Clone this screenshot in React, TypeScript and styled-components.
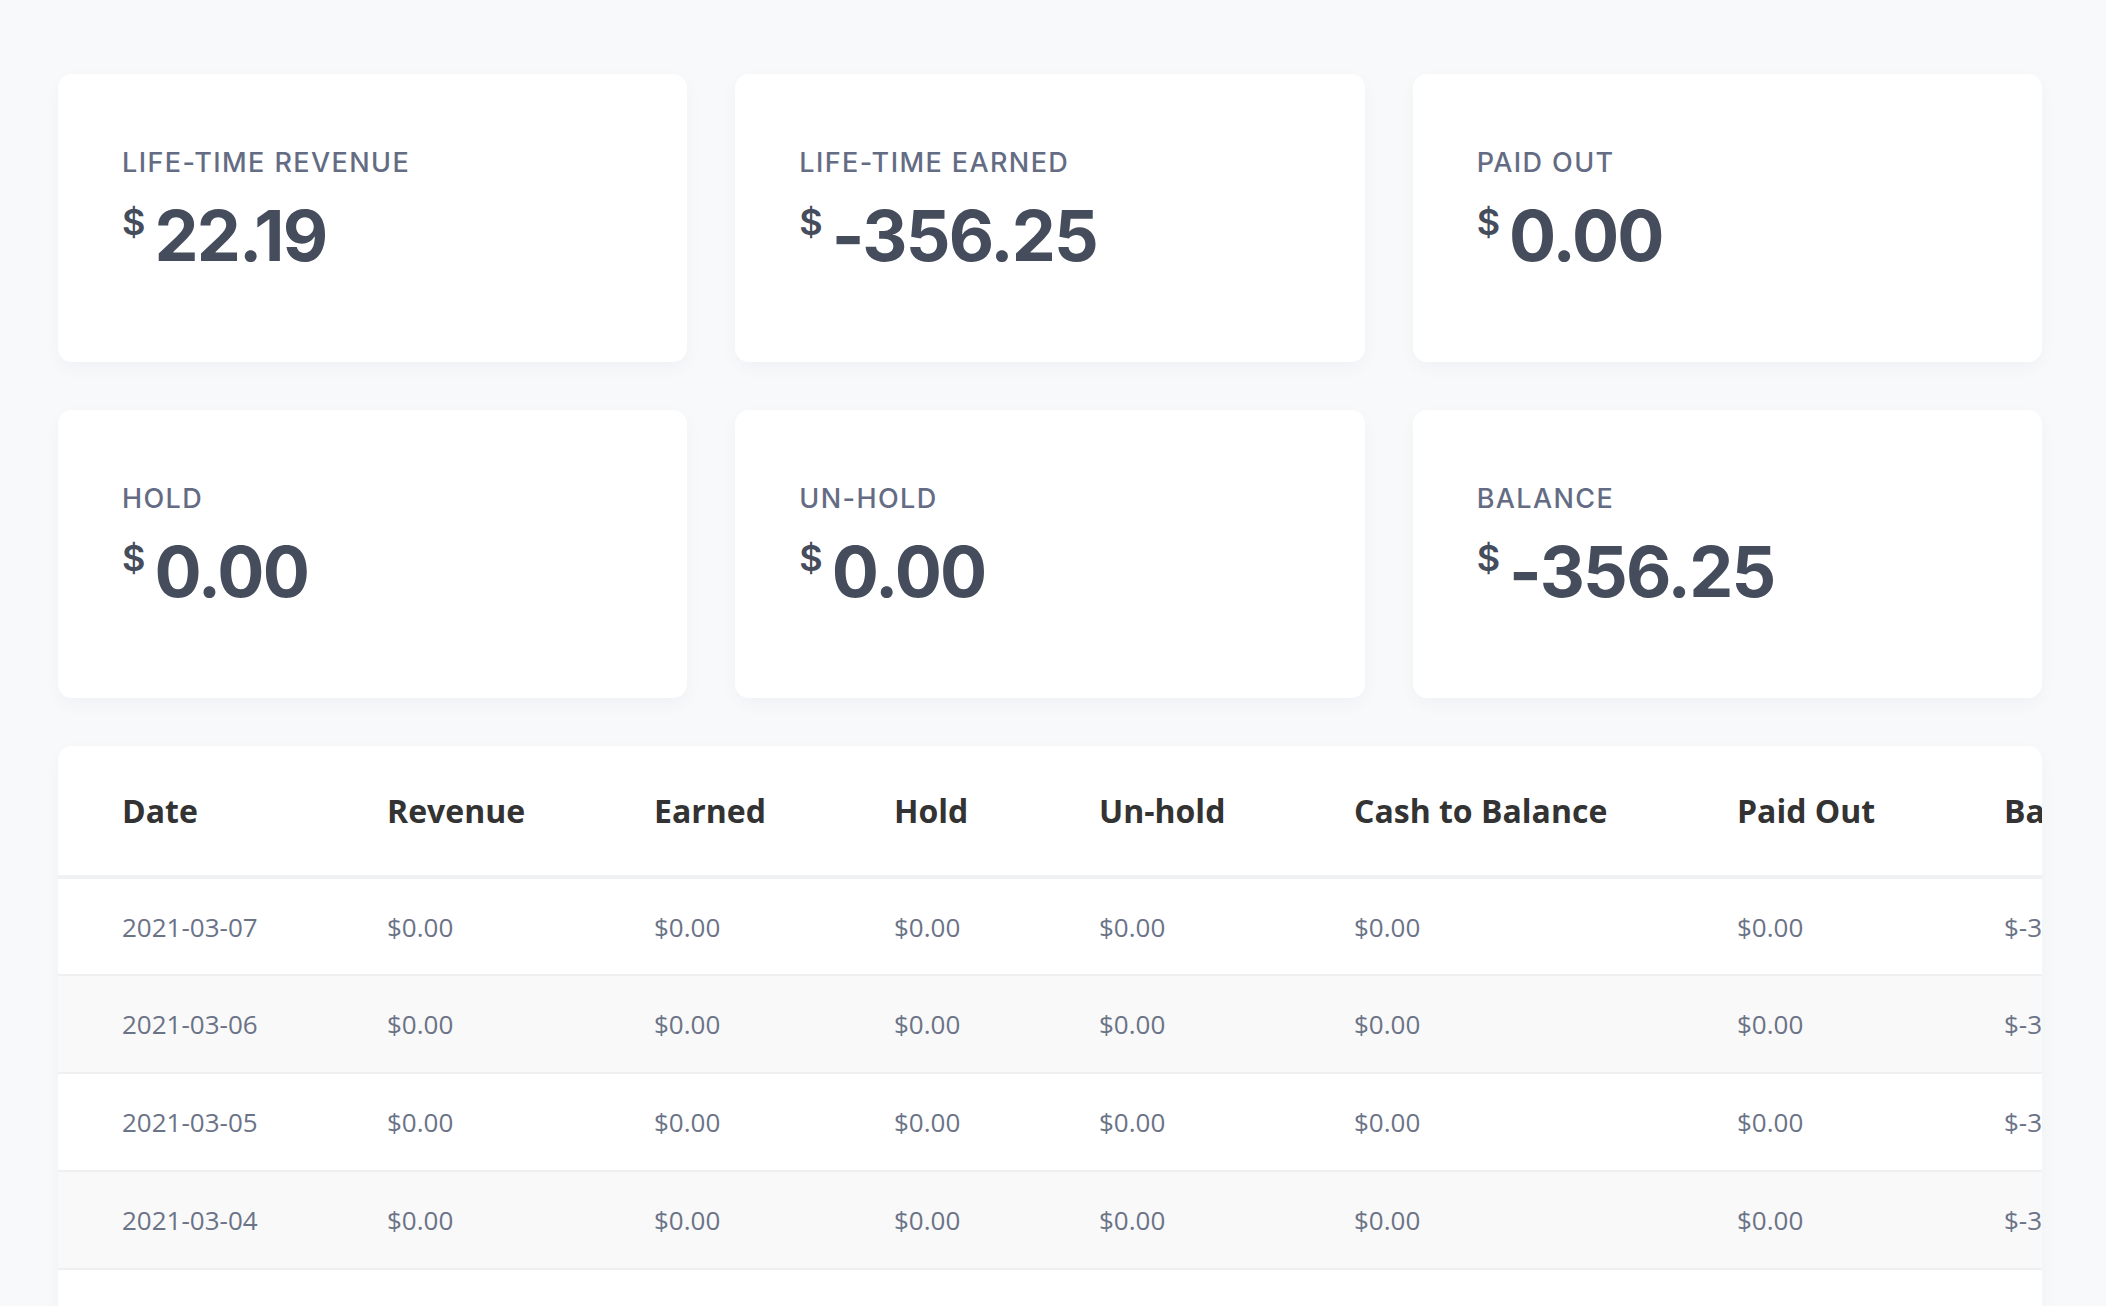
import React from "react";
import styled, { createGlobalStyle } from "styled-components";

const GlobalStyle = createGlobalStyle`
  html, body { margin: 0; padding: 0; background: #f8f9fb; }
  body { font-family: "Open Sans", "Liberation Sans", sans-serif; }
  * { box-sizing: border-box; }
`;

const Page = styled.main`
  padding: 74px 64px 0 58px;
  display: flex;
  flex-direction: column;
  gap: 48px;
  min-height: 1306px;
  overflow: hidden;
`;

const StatGrid = styled.section`
  display: grid;
  grid-template-columns: repeat(3, 1fr);
  gap: 48px;
`;

const Card = styled.div`
  background: #ffffff;
  border-radius: 14px;
  box-shadow: 0 6px 18px rgba(30, 40, 70, 0.035);
`;

const StatCard = styled(Card)`
  height: 288px;
  padding: 72px 64px 0;
  display: flex;
  flex-direction: column;
`;

const StatLabel = styled.div`
  font-family: Inter, "Noto Sans", sans-serif;
  font-weight: 500;
  font-size: 27px;
  line-height: 34px;
  letter-spacing: 1.4px;
  color: #646c84;
  text-transform: uppercase;
`;

const StatValue = styled.div`
  display: flex;
  align-items: flex-start;
  gap: 9px;
  margin-top: 16px;
  color: #454d5d;
  font-family: Inter, "Noto Sans", sans-serif;
  font-weight: 700;
`;

const Currency = styled.span`
  font-size: 36px;
  line-height: 36px;
  font-weight: 600;
  margin-top: 8px;
`;

const Amount = styled.span`
  font-size: 70px;
  line-height: 80px;
  letter-spacing: -1.8px;
`;

const TableCard = styled(Card)`
  border-radius: 14px 14px 0 0;
  overflow: hidden;
`;

const Table = styled.table`
  table-layout: fixed;
  border-collapse: collapse;
  width: 2102px;
`;

const HeadCell = styled.th`
  height: 131px;
  padding: 0 0 0 64px;
  text-align: left;
  font-family: "Open Sans", sans-serif;
  font-size: 32px;
  font-weight: 700;
  color: #333333;
  white-space: nowrap;
  border-bottom: 4px solid #f0f1f3;
`;

const Row = styled.tr<{ $alt: boolean }>`
  background: ${(p) => (p.$alt ? "#f9f9f9" : "#ffffff")};
  border-bottom: 2px solid #f0f0f0;
`;

const Cell = styled.td`
  height: 98px;
  padding: 0 0 0 64px;
  font-family: "Open Sans", sans-serif;
  font-size: 26px;
  color: #6b7387;
  white-space: nowrap;
  overflow: hidden;
`;

const stats = [
  { label: "Life-time revenue", value: "22.19" },
  { label: "Life-time earned", value: "-356.25" },
  { label: "Paid out", value: "0.00" },
  { label: "Hold", value: "0.00" },
  { label: "Un-hold", value: "0.00" },
  { label: "Balance", value: "-356.25" },
];

const columns = [
  { title: "Date", width: 265 },
  { title: "Revenue", width: 267 },
  { title: "Earned", width: 240 },
  { title: "Hold", width: 205 },
  { title: "Un-hold", width: 255 },
  { title: "Cash to Balance", width: 383 },
  { title: "Paid Out", width: 267 },
  { title: "Balance", width: 220 },
];

const dates = ["2021-03-07", "2021-03-06", "2021-03-05", "2021-03-04", "2021-03-03", "2021-03-02"];

export default function App() {
  return (
    <>
      <GlobalStyle />
      <Page>
        <StatGrid>
          {stats.map((s) => (
            <StatCard key={s.label}>
              <StatLabel>{s.label}</StatLabel>
              <StatValue>
                <Currency>$</Currency>
                <Amount>{s.value}</Amount>
              </StatValue>
            </StatCard>
          ))}
        </StatGrid>
        <TableCard>
          <Table>
            <colgroup>
              {columns.map((c) => (
                <col key={c.title} style={{ width: c.width }} />
              ))}
            </colgroup>
            <thead>
              <tr>
                {columns.map((c) => (
                  <HeadCell key={c.title}>{c.title}</HeadCell>
                ))}
              </tr>
            </thead>
            <tbody>
              {dates.map((d, i) => (
                <Row key={d} $alt={i % 2 === 1}>
                  <Cell>{d}</Cell>
                  <Cell>$0.00</Cell>
                  <Cell>$0.00</Cell>
                  <Cell>$0.00</Cell>
                  <Cell>$0.00</Cell>
                  <Cell>$0.00</Cell>
                  <Cell>$0.00</Cell>
                  <Cell>$-356.25</Cell>
                </Row>
              ))}
            </tbody>
          </Table>
        </TableCard>
      </Page>
    </>
  );
}
